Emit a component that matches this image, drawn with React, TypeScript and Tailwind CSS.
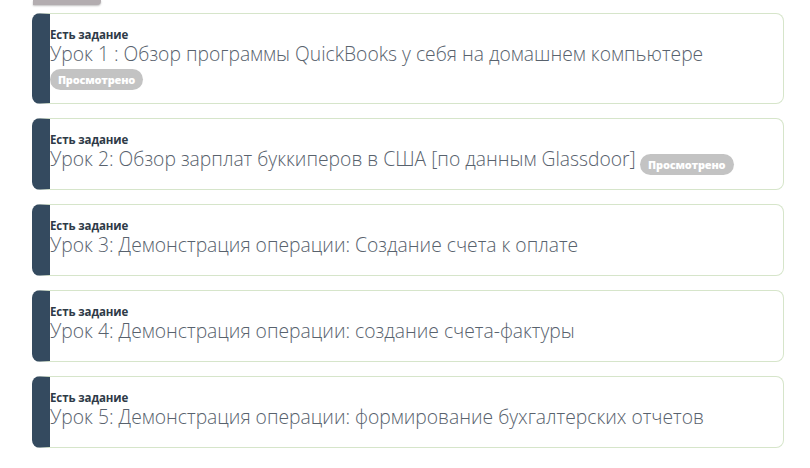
import React from "react";

type Lesson = { title: string; badge?: "block" | "inline" };

const lessons: Lesson[] = [
  { title: "Урок 1 : Обзор программы QuickBooks у себя на домашнем компьютере", badge: "block" },
  { title: "Урок 2: Обзор зарплат буккиперов в США [по данным Glassdoor]", badge: "inline" },
  { title: "Урок 3: Демонстрация операции: Создание счета к оплате" },
  { title: "Урок 4: Демонстрация операции: создание счета-фактуры" },
  { title: "Урок 5: Демонстрация операции: формирование бухгалтерских отчетов" },
];

function Badge({ block }: { block?: boolean }) {
  return (
    <span
      className={
        (block ? "flex w-[93px] mt-[4px] " : "inline-flex w-[94px] ml-[4px] align-[-3px] ") +
        "h-[21px] items-center justify-center rounded-full bg-[#c3c3c3] text-white text-[11px] font-extrabold leading-none tracking-[-0.2px]"
      }
    >
      Просмотрено
    </span>
  );
}

export default function App() {
  return (
    <div
      className="w-[810px] h-[468px] bg-white overflow-hidden"
      style={{ fontFamily: '"Open Sans", "Noto Sans", sans-serif' }}
    >
      <div className="ml-[33px] w-[68px] h-[5px] bg-[#b3adb0] rounded-br-[4px] shadow-[0_1px_2px_rgba(0,0,0,0.25)]" />
      <div className="ml-[32px] w-[752px] mt-[8px] flex flex-col gap-[14px]">
        {lessons.map((l, i) => (
          <div
            key={i}
            className={
              "rounded-[8px] border border-[#d6e5ca] border-l-[18px] border-l-[#344a5f] pt-[13px] pr-3 " +
              (i === 0 ? "pb-[13px]" : "pb-[14px]")
            }
          >
            <div className="text-[11.5px] leading-[16px] font-bold text-[#2e3a47] tracking-[-0.1px]">
              Есть задание
            </div>
            {l.badge === "block" ? (
              <div>
                <div className="text-[19.3px] leading-[22px] font-light text-[#58626d]">{l.title}</div>
                <Badge block />
              </div>
            ) : (
              <div className="min-h-[27px] text-[19.3px] leading-[22px] font-light text-[#58626d]">
                {l.title}
                {l.badge === "inline" && <Badge />}
              </div>
            )}
          </div>
        ))}
      </div>
    </div>
  );
}
